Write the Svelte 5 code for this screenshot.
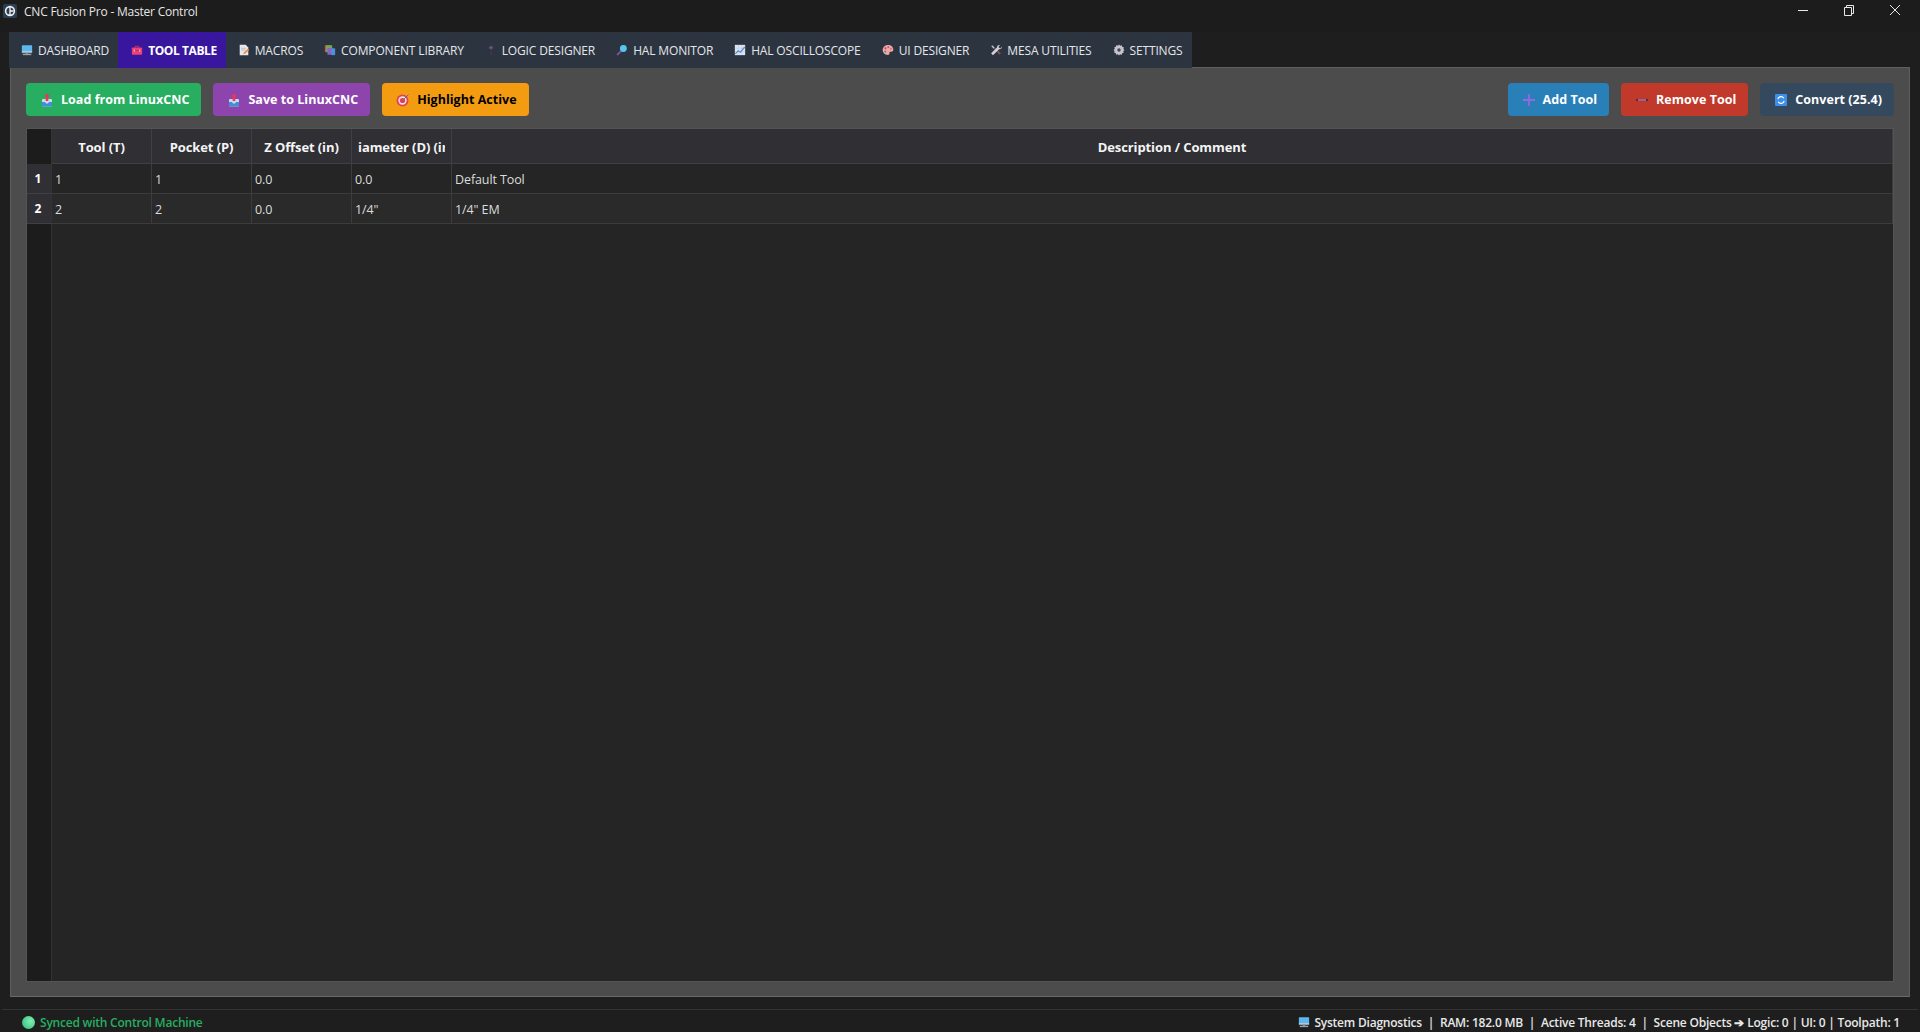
<script>
  const tabs = [
    { icon: "desktop", label: "DASHBOARD" },
    { icon: "toolbox", label: "TOOL TABLE", active: true },
    { icon: "memo", label: "MACROS" },
    { icon: "books", label: "COMPONENT LIBRARY" },
    { icon: "slider", label: "LOGIC DESIGNER" },
    { icon: "search", label: "HAL MONITOR" },
    { icon: "chart", label: "HAL OSCILLOSCOPE" },
    { icon: "palette", label: "UI DESIGNER" },
    { icon: "tools", label: "MESA UTILITIES" },
    { icon: "gear", label: "SETTINGS" },
  ];

  const columns = ["Tool (T)", "Pocket (P)", "Z Offset (in)", "Diameter (D) (in)", "Description / Comment"];

  const rows = [
    ["1", "1", "0.0", "0.0", "Default Tool"],
    ["2", "2", "0.0", '1/4"', '1/4" EM'],
  ];
</script>

{#snippet icon(name)}
  <svg class="icon" viewBox="0 0 14 14" aria-hidden="true">
    {#if name === "desktop"}
      <rect x="1" y="1.5" width="12" height="8.5" rx="0.8" fill="#5cb8ee" />
      <rect x="1" y="8.5" width="12" height="1.5" fill="#c9d3da" />
      <rect x="5.5" y="10" width="3" height="1.5" fill="#8a929a" />
      <rect x="2" y="11.3" width="10" height="1.7" fill="#9aa2a9" />
    {:else if name === "toolbox"}
      <path d="M5 4V2.600h4V4" fill="none" stroke="#b8325e" stroke-width="1.200" />
      <rect x="1" y="4" width="12" height="8.500" rx="1" fill="#ee3f78" />
      <rect x="1" y="7.300" width="12" height="0.800" fill="#a92a58" />
      <rect x="3" y="6.600" width="1.600" height="2.200" fill="#f6b4c9" />
      <rect x="9.400" y="6.600" width="1.600" height="2.200" fill="#f6b4c9" />
    {:else if name === "memo"}
      <path d="M2 1h7l3 3v9H2z" fill="#e6e8ec" />
      <path d="M3.500 5h6M3.500 7h5" stroke="#a9aeb6" stroke-width="0.800" />
      <path d="M6 12l1-2.500 4.500-4 1.500 1.500-4.500 4z" fill="#f08a3c" />
    {:else if name === "books"}
      <rect x="1" y="1.500" width="7" height="8" fill="#c3534f" />
      <rect x="2.500" y="1.500" width="7" height="8" fill="#6fb04a" />
      <rect x="4" y="4.500" width="6" height="8" fill="#8a63c9" />
      <rect x="8.500" y="5" width="4.500" height="8" fill="#4f8fdc" />
    {:else if name === "slider"}
      <rect x="6.300" y="1" width="1.400" height="12" fill="#4c3a5e" />
      <rect x="4.800" y="3" width="4.400" height="2.400" rx="0.500" fill="#6a5580" />
      <rect x="5.400" y="8" width="3.200" height="1.600" fill="#3a2f48" />
    {:else if name === "search"}
      <path d="M6.200 8L1.800 12.200" stroke="#7a4fa8" stroke-width="2.200" stroke-linecap="round" />
      <circle cx="8.600" cy="5.200" r="4" fill="#56c5f0" />
    {:else if name === "chart"}
      <rect x="1" y="1" width="12" height="12" fill="#dfe3ee" />
      <path d="M1 5h12M1 9h12M5 1v12M9 1v12" stroke="#b9c2d6" stroke-width="0.500" />
      <path d="M1.500 11.500L5 8l2.500 1.500L12.500 3.500" fill="none" stroke="#4a90e0" stroke-width="1.400" />
    {:else if name === "palette"}
      <path d="M7 1.200c3.600 0 6.200 2.400 6.200 5.300 0 2-1.600 2.700-3 2.500-1.200-.2-1.900.6-1.500 1.600.4 1.100-.4 2.200-1.900 2.200C3.600 12.800.8 10.300.8 7 .8 3.700 3.500 1.200 7 1.200z" fill="#f2a8a0" />
      <circle cx="4" cy="5" r="1.100" fill="#d8344c" />
      <circle cx="7.300" cy="3.600" r="1.100" fill="#8a4fc0" />
      <circle cx="10.400" cy="5.400" r="1" fill="#e0567c" />
      <circle cx="3.800" cy="8.800" r="1.100" fill="#4a7fd0" />
    {:else if name === "tools"}
      <path d="M2.500 1.500l3 3-1 1-3-3z" fill="#c9ccd2" />
      <path d="M4.500 5.500l6.500 7 1.800-1.600-7-6.500z" fill="#8e4a5a" />
      <path d="M11.800 1.200l-2 2 .9 1.200 1.200.8 2-1.900c.2 1.800-1.500 3.400-3.300 2.800L3.500 13 1.300 10.800 8.400 3.800C7.900 2 9.800.6 11.800 1.200z" fill="#cfd2d8" />
    {:else if name === "gear"}
      <path d="M7 .6l1.400 1.500 1.900-.6.500 1.900 1.900.5-.6 1.900L13.400 7l-1.500 1.400.6 1.900-1.900.5-.5 1.900-1.900-.6L7 13.400l-1.400-1.500-1.900.6-.5-1.900-1.900-.5.6-1.900L.6 7l1.500-1.400-.6-1.900 1.900-.5.5-1.900 1.900.6z" fill="#c6c3cc" />
      <circle cx="7" cy="7" r="2" fill="#4a4356" />
    {:else if name === "outbox"}
      <rect x="2" y="6" width="10" height="7.500" rx="1" fill="#cfd8e6" />
      <path d="M2 9h3l1 1.500h2L9 9h3v3.500a1 1 0 0 1-1 1H3a1 1 0 0 1-1-1z" fill="#3f8ed8" />
      <path d="M7 .5l3 3H8.300v4.500H5.700V3.500H4z" fill="#e5395a" />
    {:else if name === "target"}
      <circle cx="6.500" cy="7.500" r="6" fill="#e4404f" />
      <circle cx="6.500" cy="7.500" r="4.200" fill="#f3dfe4" />
      <circle cx="6.500" cy="7.500" r="2.600" fill="#e4404f" />
      <path d="M6.500 7.500L12.500 1.500" stroke="#5a6fa8" stroke-width="1" />
    {:else if name === "plus"}
      <path d="M7 1v12M1 7h12" stroke="#9468e0" stroke-width="1.800" />
    {:else if name === "minus"}
      <path d="M1 7h12" stroke="#5a2a3a" stroke-width="2.200" />
      <path d="M3 7h8" stroke="#a0608c" stroke-width="2.200" />
    {:else if name === "convert"}
      <rect x="1" y="1" width="12" height="12" rx="1" fill="#3f8fe8" />
      <path d="M3.800 6.200A3.300 3.300 0 0 1 9.800 5.200M10.200 7.800A3.300 3.300 0 0 1 4.200 8.800" fill="none" stroke="#fff" stroke-width="1.200" />
    {/if}
  </svg>
{/snippet}

<div class="window">
  <header class="titlebar">
    <svg class="logo" viewBox="0 0 16 16" aria-hidden="true">
      <rect width="16" height="16" rx="2" fill="#2c3e50" />
      <circle cx="8" cy="8" r="5" fill="none" stroke="#eef2f6" stroke-width="1.800" />
      <path d="M8 8h4M8 3v10" stroke="#eef2f6" stroke-width="1.500" />
    </svg>
    <span class="title">CNC Fusion Pro - Master Control</span>
    <div class="controls">
      <svg viewBox="0 0 46 20" aria-hidden="true"><path d="M18 10.500h10" stroke="#e8e8e8" /></svg>
      <svg viewBox="0 0 46 20" aria-hidden="true"><path d="M18.500 7.500h7v8h-7zM20.500 7.500v-2h7v8h-2" fill="none" stroke="#e8e8e8" /></svg>
      <svg viewBox="0 0 46 20" aria-hidden="true"><path d="M18 5l10 10M28 5L18 15" stroke="#e8e8e8" /></svg>
    </div>
  </header>

  <nav class="tabs">
    {#each tabs as tab}
      <div class="tab" class:active={tab.active}>
        {@render icon(tab.icon)}
        <span>{tab.label}</span>
      </div>
    {/each}
  </nav>

  <main class="panel">
    <div class="toolbar">
      <button class="btn green">{@render icon("outbox")}Load from LinuxCNC</button>
      <button class="btn purple">{@render icon("outbox")}Save to LinuxCNC</button>
      <button class="btn orange">{@render icon("target")}Highlight Active</button>
      <div class="spacer"></div>
      <button class="btn blue">{@render icon("plus")}Add Tool</button>
      <button class="btn red">{@render icon("minus")}Remove Tool</button>
      <button class="btn navy">{@render icon("convert")}Convert (25.4)</button>
    </div>

    <div class="table">
      <div class="row head">
        <div class="gutter"></div>
        {#each columns as col}
          <div class="th"><span>{col}</span></div>
        {/each}
      </div>
      {#each rows as row, i}
        <div class="row body" class:alt={i % 2 === 1}>
          <div class="gutter num">{i + 1}</div>
          {#each row as cell}
            <div class="td">{cell}</div>
          {/each}
        </div>
      {/each}
      <div class="filler"><div class="gutter"></div></div>
    </div>
  </main>

  <footer class="status">
    <span class="synced"><i class="dot"></i>Synced with Control Machine</span>
    <span class="diag">
      {@render icon("desktop")}
      System Diagnostics &nbsp;|&nbsp; RAM: 182.0 MB &nbsp;|&nbsp; Active Threads: 4 &nbsp;|&nbsp; Scene Objects ➔ Logic: 0 | UI: 0 | Toolpath: 1
    </span>
  </footer>
</div>

<style>
  :global(body) {
    margin: 0;
    background: #1e1e1e;
  }

  .window {
    height: 100vh;
    display: flex;
    flex-direction: column;
    background: #1e1e1e;
    color: #f0f0f0;
    font-family: "Open Sans", "Liberation Sans", sans-serif;
    font-size: 12px;
    overflow: hidden;
  }

  .titlebar {
    height: 32px;
    flex: none;
    display: flex;
    align-items: flex-start;
    background: #1c1c1c;
    padding-left: 3px;
  }

  .logo {
    width: 14px;
    height: 14px;
    margin-top: 4px;
  }

  .title {
    margin-left: 7px;
    line-height: 23px;
    font-size: 12px;
    letter-spacing: -0.22px;
    color: #e6e6e6;
  }

  .controls {
    margin-left: auto;
    margin-right: 2px;
    display: flex;
  }

  .controls svg {
    width: 46px;
    height: 20px;
  }

  .tabs {
    flex: none;
    align-self: flex-start;
    display: flex;
    height: 36px;
    margin-left: 9px;
    margin-bottom: -1px;
    position: relative;
    background: #2c3440;
  }

  .tab {
    display: flex;
    align-items: center;
    gap: 5px;
    padding: 0 9px 0 12px;
    color: #e4e7ea;
    letter-spacing: -0.15px;
    white-space: nowrap;
  }

  .tab.active {
    background: #38169e;
    color: #fff;
    font-weight: 700;
    padding-left: 13px;
    letter-spacing: -0.42px;
  }

  .icon {
    width: 12px;
    height: 12px;
    flex: none;
  }

  .panel {
    flex: 1;
    min-height: 0;
    margin: 0 10px;
    display: flex;
    flex-direction: column;
    background: #4c4c4c;
    border: 1px solid #5e5e5e;
    border-bottom-color: #6a6a6a;
  }

  .toolbar {
    flex: none;
    display: flex;
    gap: 12px;
    padding: 15px 15px 12px;
  }

  .spacer {
    flex: 1;
  }

  .btn {
    height: 33px;
    padding: 0 12px 0 14px;
    display: flex;
    align-items: center;
    gap: 7px;
    border: 0;
    border-radius: 4px;
    font: 700 12.500px "Open Sans", "Liberation Sans", sans-serif;
    letter-spacing: 0.03px;
    color: #fff;
  }

  .btn .icon {
    width: 14px;
    height: 14px;
  }

  .green { background: #27ae60; }
  .purple { background: #8e44ad; }
  .orange { background: #f39c12; color: #000; }
  .blue { background: #2980b9; }
  .red { background: #c0392b; }
  .navy { background: #34495e; }

  .table {
    flex: 1;
    min-height: 0;
    margin: 0 15px 14px;
    display: flex;
    flex-direction: column;
    background: #252525;
    border: 1px solid #545454;
  }

  .row {
    flex: none;
    display: grid;
    grid-template-columns: 25px 100px 100px 100px 100px 1fr;
  }

  .head {
    height: 35px;
    background: #2f2f34;
  }

  .gutter {
    background: #1c1c1c;
    border-right: 1px solid #333;
  }

  .th {
    display: flex;
    align-items: center;
    justify-content: center;
    padding: 1px 6px 0;
    overflow: hidden;
    border-right: 1px solid #3f3f44;
    border-bottom: 1px solid #3f3f44;
    font-size: 13px;
    font-weight: 700;
    white-space: nowrap;
    letter-spacing: -0.1px;
    color: #f4f4f4;
  }

  .th span {
    display: flex;
    justify-content: center;
    width: 100%;
    overflow: hidden;
    flex: none;
  }

  .body {
    height: 30px;
  }

  .alt {
    background: #2a2a2a;
  }

  .num {
    display: flex;
    align-items: center;
    justify-content: center;
    padding-right: 2px;
    background: #2f2f34;
    border-bottom: 1px solid #3f3f44;
    font-weight: 700;
    color: #fff;
  }

  .td {
    display: flex;
    align-items: center;
    padding: 1px 0 0 3px;
    border-right: 1px solid #3c3c3c;
    border-bottom: 1px solid #3c3c3c;
    font-size: 12.500px;
    color: #dcdcdc;
    letter-spacing: -0.1px;
  }

  .filler {
    flex: 1;
    display: grid;
    grid-template-columns: 25px 1fr;
  }

  .status {
    flex: none;
    height: 20px;
    margin: 12px 2px 0;
    padding: 2px 18px 0 20px;
    display: flex;
    align-items: center;
    justify-content: space-between;
    border-top: 1px solid #333;
    font-weight: 600;
    letter-spacing: -0.22px;
  }

  .synced {
    display: flex;
    align-items: center;
    gap: 5px;
    color: #27ae60;
  }

  .dot {
    width: 13px;
    height: 13px;
    border-radius: 50%;
    background: radial-gradient(circle at 65% 40%, #7ff0b4, #2eb872);
  }

  .diag {
    display: flex;
    align-items: center;
    gap: 2px;
    white-space: pre;
    color: #e8e8e8;
  }
</style>
